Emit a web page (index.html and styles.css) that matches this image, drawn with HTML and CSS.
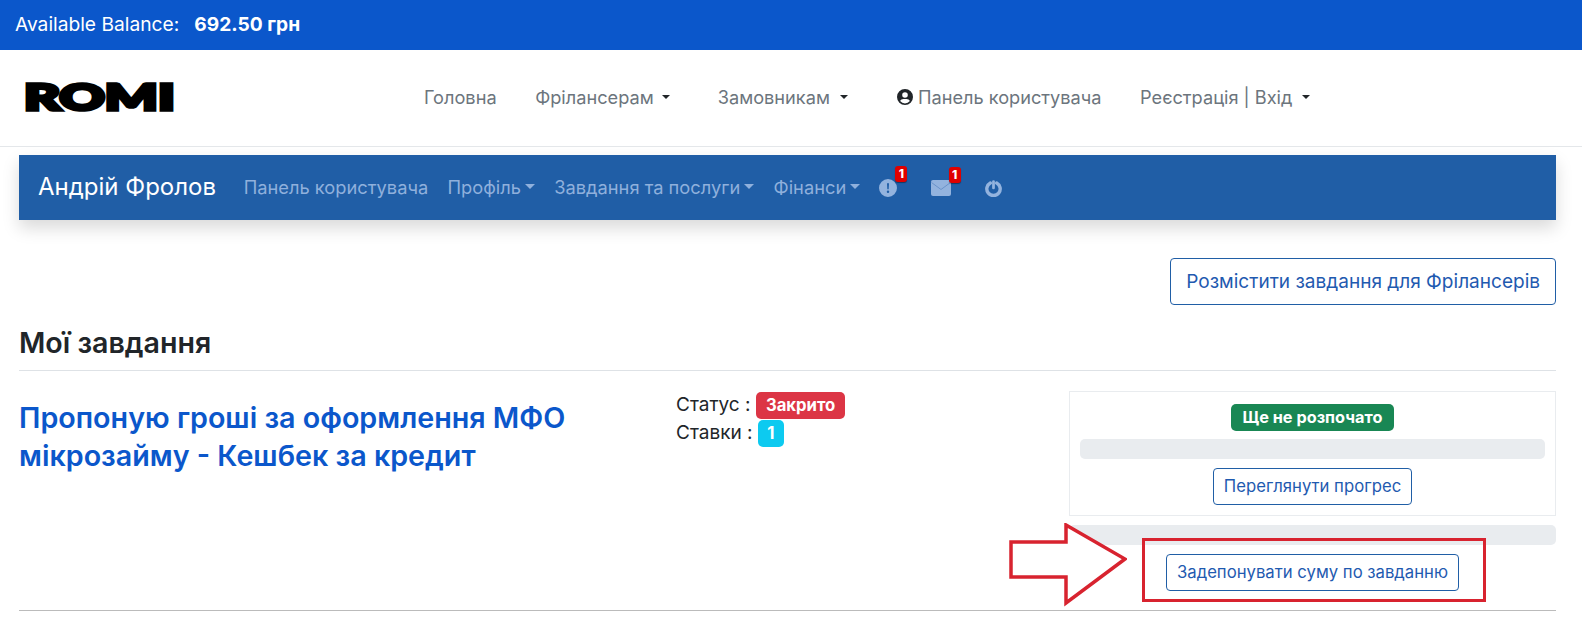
FILE: index.html
```html
<!DOCTYPE html>
<html lang="en">
<head>
    <meta charset="UTF-8">
    <meta name="viewport" content="width=device-width, initial-scale=1.0">
    <title>Мої завдання</title>
    <link rel="stylesheet" href="styles.css">
</head>
<body>
    <div class="balance-bar">
        <span>Available Balance:</span>
        <strong>692.50 грн</strong>
    </div>

    <header class="site-nav">
        <a class="logo" href="#"><span>ROMI</span></a>
        <nav class="site-links">
            <a href="#">Головна</a>
            <a class="caret" href="#">Фрілансерам</a>
            <a class="caret" href="#">Замовникам</a>
            <a href="#">
                <svg class="user-icon" viewBox="0 0 16 16"><path fill-rule="evenodd" d="M8 0a8 8 0 1 0 0 16A8 8 0 0 0 8 0Zm0 3.200a2.800 2.800 0 1 1 0 5.600 2.800 2.800 0 0 1 0-5.600Zm0 11.200a6.400 6.400 0 0 1-4.900-2.300C3.700 10.800 5 10 6.400 10h3.200c1.400 0 2.700.8 3.300 2.100A6.400 6.400 0 0 1 8 14.400Z"/></svg>
                Панель користувача
            </a>
            <a class="caret" href="#">Реєстрація | Вхід</a>
        </nav>
    </header>

    <main class="page">
        <div class="dash-nav">
            <a class="dash-name" href="#">Андрій Фролов</a>
            <a href="#">Панель користувача</a>
            <a class="caret" href="#">Профіль</a>
            <a class="caret" href="#">Завдання та послуги</a>
            <a class="caret" href="#">Фінанси</a>
            <a class="dash-icon" href="#">
                <svg width="18" height="18" viewBox="0 0 16 16"><path fill-rule="evenodd" d="M8 0a8 8 0 1 0 0 16A8 8 0 0 0 8 0Zm-.9 3.800h1.800L8.600 9.200H7.400ZM8 10.300a1.100 1.100 0 1 1 0 2.200 1.100 1.100 0 0 1 0-2.200Z"/></svg>
                <span class="count">1</span>
            </a>
            <a class="dash-icon mail" href="#">
                <svg width="20" height="16" viewBox="0 0 20 16"><rect width="20" height="16" rx="2"/><path d="M.5 2.500 10 9.500l9.500-7" fill="none" stroke="#5f8ac4" stroke-width=".8"/></svg>
                <span class="count">1</span>
            </a>
            <a class="dash-icon power" href="#">
                <svg width="17" height="17" viewBox="0 0 16 16"><path d="M5 2.800a6.300 6.300 0 1 0 6 0" fill="none" stroke="#93b3de" stroke-width="3.200" stroke-linecap="round"/><path d="M8 1.500v6" fill="none" stroke="#93b3de" stroke-width="2.600" stroke-linecap="round"/></svg>
            </a>
        </div>

        <div class="page-actions">
            <a class="btn btn-lg" href="#">Розмістити завдання для Фрілансерів</a>
        </div>

        <h2 class="page-title">Мої завдання</h2>

        <div class="task-row">
            <h3 class="task-title"><a href="#">Пропоную гроші за оформлення МФО мікрозайму - Кешбек за кредит</a></h3>
            <div class="task-meta">
                <div>Статус : <span class="badge badge-red">Закрито</span></div>
                <div>Ставки : <span class="badge badge-cyan">1</span></div>
            </div>
            <div class="task-side">
                <div class="progress-card">
                    <span class="badge badge-green">Ще не розпочато</span>
                    <div class="progress-track"></div>
                    <a class="btn" href="#">Переглянути прогрес</a>
                </div>
                <div class="progress-track second"></div>
                <a class="btn" href="#">Задепонувати суму по завданню</a>
            </div>
        </div>
    </main>

    <!-- hand drawn marks on top of the screenshot -->
    <svg class="mark-arrow" width="118" height="84" viewBox="0 0 118 84"><path d="M2 19h55V2l59 34-59 44V54H2Z" fill="#fff" stroke="#d8232f" stroke-width="3.500"/></svg>
    <div class="mark-box"></div>
</body>
</html>
```

FILE: styles.css
```css
* {
    box-sizing: border-box;
}
body {
    margin: 0;
    font-family: Inter, "Noto Sans", sans-serif;
    font-size: 18.200px;
    color: #212529;
    background: #fff;
    position: relative;
    height: 621px;
    overflow: hidden;
}
a {
    text-decoration: none;
}
.balance-bar {
    height: 50px;
    background: #0b57cb;
    color: #fff;
    font-size: 19.200px;
    display: flex;
    align-items: center;
    gap: 15px;
    padding: 0 15px 2px;
}
.balance-bar strong {
    font-weight: 700;
}
.site-nav {
    height: 97px;
    display: flex;
    align-items: center;
    padding-bottom: 2px;
    border-bottom: 1px solid #e4e7ea;
    position: relative;
}
.logo {
    width: 424px;
    padding-left: 24px;
    color: #000;
}
.logo span {
    display: inline-block;
    font-family: Lato, sans-serif;
    font-weight: 900;
    font-size: 36px;
    line-height: 30px;
    -webkit-text-stroke: 3.500px #000;
    transform: scale(1.55, 1);
    transform-origin: left center;
}
.site-links {
    display: flex;
    align-items: center;
    gap: 38.500px;
}
.site-links a {
    color: #6c757d;
    display: flex;
    align-items: center;
    gap: 5px;
}
.site-links .caret::after,
.dash-nav .caret::after {
    content: "";
    display: inline-block;
    border-top: 5px solid;
    border-left: 5px solid transparent;
    border-right: 5px solid transparent;
}
.site-links .caret::after {
    color: #212529;
    border-top-width: 4.800px;
    border-left-width: 4.500px;
    border-right-width: 4.500px;
    margin-left: 3px;
}
.site-links .caret:nth-child(2) {
    margin-right: 9.500px;
}
.site-links .caret:nth-child(3) {
    margin-right: 10.500px;
}
.site-links .caret:nth-child(3)::after,
.site-links .caret:last-child::after {
    margin-left: 5px;
}
.user-icon {
    width: 16px;
    height: 16px;
    fill: #212529;
}
.page {
    padding: 8px 26px 0 19px;
}
.dash-nav {
    height: 65px;
    background: #205ea6;
    box-shadow: 0 8px 16px rgba(0, 0, 0, 0.15);
    display: flex;
    align-items: center;
    gap: 19.200px;
    padding: 0 19px 2px;
}
.dash-nav a {
    color: #8fb0dc;
    display: flex;
    align-items: center;
    gap: 4px;
    position: relative;
    font-size: 18.300px;
}
.dash-nav .dash-name {
    color: #fff;
    font-size: 24px;
    margin-right: 8.500px;
}
.dash-icon svg {
    fill: #93b3de;
    margin-top: 3px;
}
.dash-icon.mail {
    margin-left: 14px;
}
.dash-icon.power {
    margin-left: 15px;
}
.count {
    position: absolute;
    top: -10px;
    right: -10px;
    background: #e00000;
    color: #fff;
    font-size: 12px;
    font-weight: 800;
    line-height: 16px;
    width: 12px;
    text-align: center;
    border-radius: 3px;
    box-shadow: 0 1px 1px rgba(0, 0, 0, 0.4);
}
.page-actions {
    display: flex;
    justify-content: flex-end;
    margin-top: 38px;
}
.btn {
    display: inline-block;
    border: 1px solid #205ea6;
    border-radius: 4px;
    background: #fff;
    color: #1f5ab0;
    font-size: 16.700px;
    line-height: 21px;
    padding: 7px 10px;
}
.btn-lg {
    font-size: 19.050px;
    line-height: 27px;
    padding: 9px 15px;
}
.page-title {
    font-size: 28.600px;
    font-weight: 600;
    line-height: 32px;
    margin: 22px 0 0;
    padding-bottom: 11px;
    border-bottom: 1px solid #dee2e6;
}
.task-row {
    display: grid;
    grid-template-columns: 657px 393px 487px;
    height: 240px;
    padding-top: 20px;
    border-bottom: 1px solid #bbb;
}
.task-title {
    margin: 8px 0 0;
    font-size: 28.700px;
    font-weight: 600;
    line-height: 38px;
    width: 590px;
}
.task-title a {
    color: #0b57cb;
}
.task-meta {
    font-size: 19px;
    line-height: 28px;
}
.badge {
    display: inline-block;
    font-size: 16.700px;
    font-weight: 700;
    line-height: 19px;
    color: #fff;
    padding: 4px 10px;
    border-radius: 5px;
}
.badge-red {
    background: #dc3545;
}
.badge-cyan {
    background: #0dcaf0;
    padding: 4px 9.500px;
}
.badge-green {
    background: #198754;
    font-size: 16.300px;
    padding: 4px 11.500px;
}
.task-side {
    text-align: center;
}
.progress-card {
    height: 125px;
    border: 1px solid #e9ecef;
    padding: 12px 10px 0;
}
.progress-track {
    height: 20px;
    background: #e9ecef;
    border-radius: 5px;
    margin: 8px 0 9px;
}
.progress-track.second {
    margin: 9px 0 9px;
}
.mark-arrow {
    position: absolute;
    left: 1009px;
    top: 523px;
}
.mark-box {
    position: absolute;
    left: 1142px;
    top: 538px;
    width: 344px;
    height: 64px;
    border: 3px solid #d8232f;
}
```
